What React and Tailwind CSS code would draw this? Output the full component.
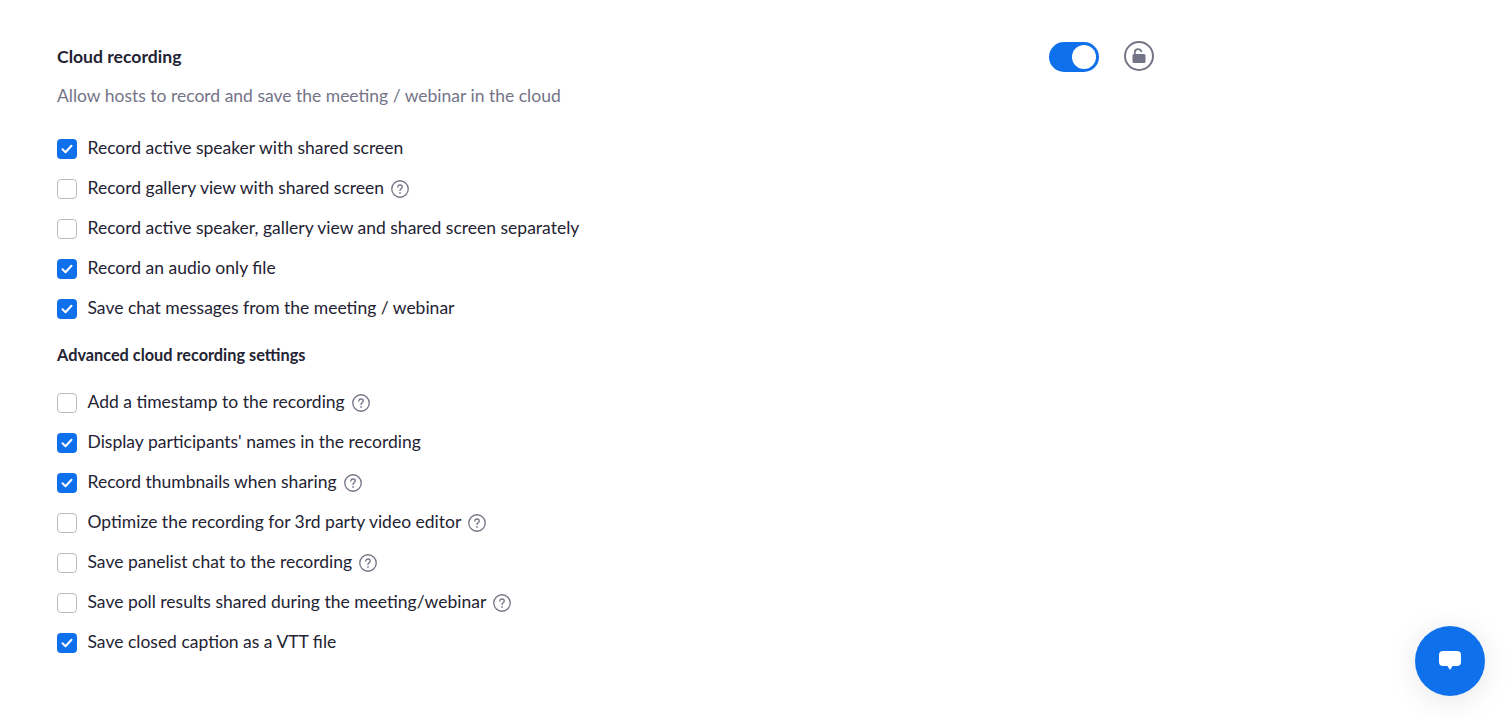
const basicOptions = [
  { label: 'Record active speaker with shared screen', checked: true },
  { label: 'Record gallery view with shared screen', help: true },
  { label: 'Record active speaker, gallery view and shared screen separately' },
  { label: 'Record an audio only file', checked: true },
  { label: 'Save chat messages from the meeting / webinar', checked: true },
];

const advancedOptions = [
  { label: 'Add a timestamp to the recording', help: true },
  { label: "Display participants' names in the recording", checked: true },
  { label: 'Record thumbnails when sharing', checked: true, help: true },
  { label: 'Optimize the recording for 3rd party video editor', help: true },
  { label: 'Save panelist chat to the recording', help: true },
  { label: 'Save poll results shared during the meeting/webinar', help: true },
  { label: 'Save closed caption as a VTT file', checked: true },
];

function HelpIcon() {
  return (
    <svg width="18" height="18" viewBox="0 0 18 18" fill="none" className="ml-[7px] mt-[2px] shrink-0">
      <circle cx="9" cy="9" r="8.25" stroke="#747487" strokeWidth="1.3" />
      <path d="M6.8 7.1c0-1.25 1-2.1 2.25-2.1s2.2.8 2.2 1.95c0 1.7-2.25 1.8-2.25 3.5" stroke="#747487" strokeWidth="1.3" strokeLinecap="round" />
      <circle cx="9" cy="12.9" r="0.85" fill="#747487" />
    </svg>
  );
}

function Option({ label, checked, help }) {
  return (
    <div className="flex h-10 items-center">
      {checked ? (
        <div className="mt-[2px] flex h-5 w-5 shrink-0 items-center justify-center rounded-[4px] bg-[#0e71eb]">
          <svg width="12" height="10" viewBox="0 0 12 10" fill="none">
            <path d="M1.5 5.2l3 3 6-6.400" stroke="white" strokeWidth="2" strokeLinecap="round" strokeLinejoin="round" />
          </svg>
        </div>
      ) : (
        <div className="mt-[2px] h-5 w-5 shrink-0 rounded-[4px] border border-[#bababa] bg-white"></div>
      )}
      <span className="ml-[10.5px] text-[17.5px] leading-6 text-[#232333]">{label}</span>
      {help && <HelpIcon />}
    </div>
  );
}

export default function App() {
  return (
    <div className="relative h-[718px] overflow-hidden bg-white pl-[57px] font-['Lato','Liberation_Sans',sans-serif]">
      <div className="w-[1097px] pt-[41px]">
        <div className="flex items-start justify-between">
          <h2 className="mt-[4px] text-[17.6px] font-bold leading-6 text-[#232333]">Cloud recording</h2>
          <div className="flex items-start gap-[25px]">
            <div className="mt-px flex h-[30px] w-[50px] items-center justify-end rounded-full bg-[#0e71eb] pr-[3px]">
              <div className="h-6 w-6 rounded-full bg-white"></div>
            </div>
            <svg width="30" height="30" viewBox="0 0 30 30" fill="none">
              <circle cx="15" cy="15" r="14" stroke="#747487" strokeWidth="2" />
              <path d="M10.8 13V11.5a3.4 3.4 0 0 1 6.6-1.1" stroke="#747487" strokeWidth="1.8" strokeLinecap="round" />
              <rect x="8.5" y="13" width="13" height="9" rx="1.5" fill="#747487" />
            </svg>
          </div>
        </div>
        <p className="mt-[12px] text-[17.5px] leading-6 text-[#747487]">Allow hosts to record and save the meeting / webinar in the cloud</p>
      </div>

      <div className="mt-[20px]">
        {basicOptions.map((opt) => (
          <Option key={opt.label} {...opt} />
        ))}
      </div>

      <h3 className="mt-[15px] mb-[15px] text-[16.3px] font-bold leading-6 text-[#232333]">Advanced cloud recording settings</h3>

      <div>
        {advancedOptions.map((opt) => (
          <Option key={opt.label} {...opt} />
        ))}
      </div>

      <div className="absolute left-[1415px] top-[626px] flex h-[70px] w-[70px] items-center justify-center rounded-full bg-[#0e71eb] shadow-[0_4px_30px_rgba(0,0,0,0.1)]">
        <svg width="24" height="22" viewBox="0 0 24 22" fill="white">
          <path d="M5 1h14a4 4 0 0 1 4 4v7a4 4 0 0 1-4 4h-4.500L12 20l-2.500-4H5a4 4 0 0 1-4-4V5a4 4 0 0 1 4-4z" />
        </svg>
      </div>
    </div>
  );
}
